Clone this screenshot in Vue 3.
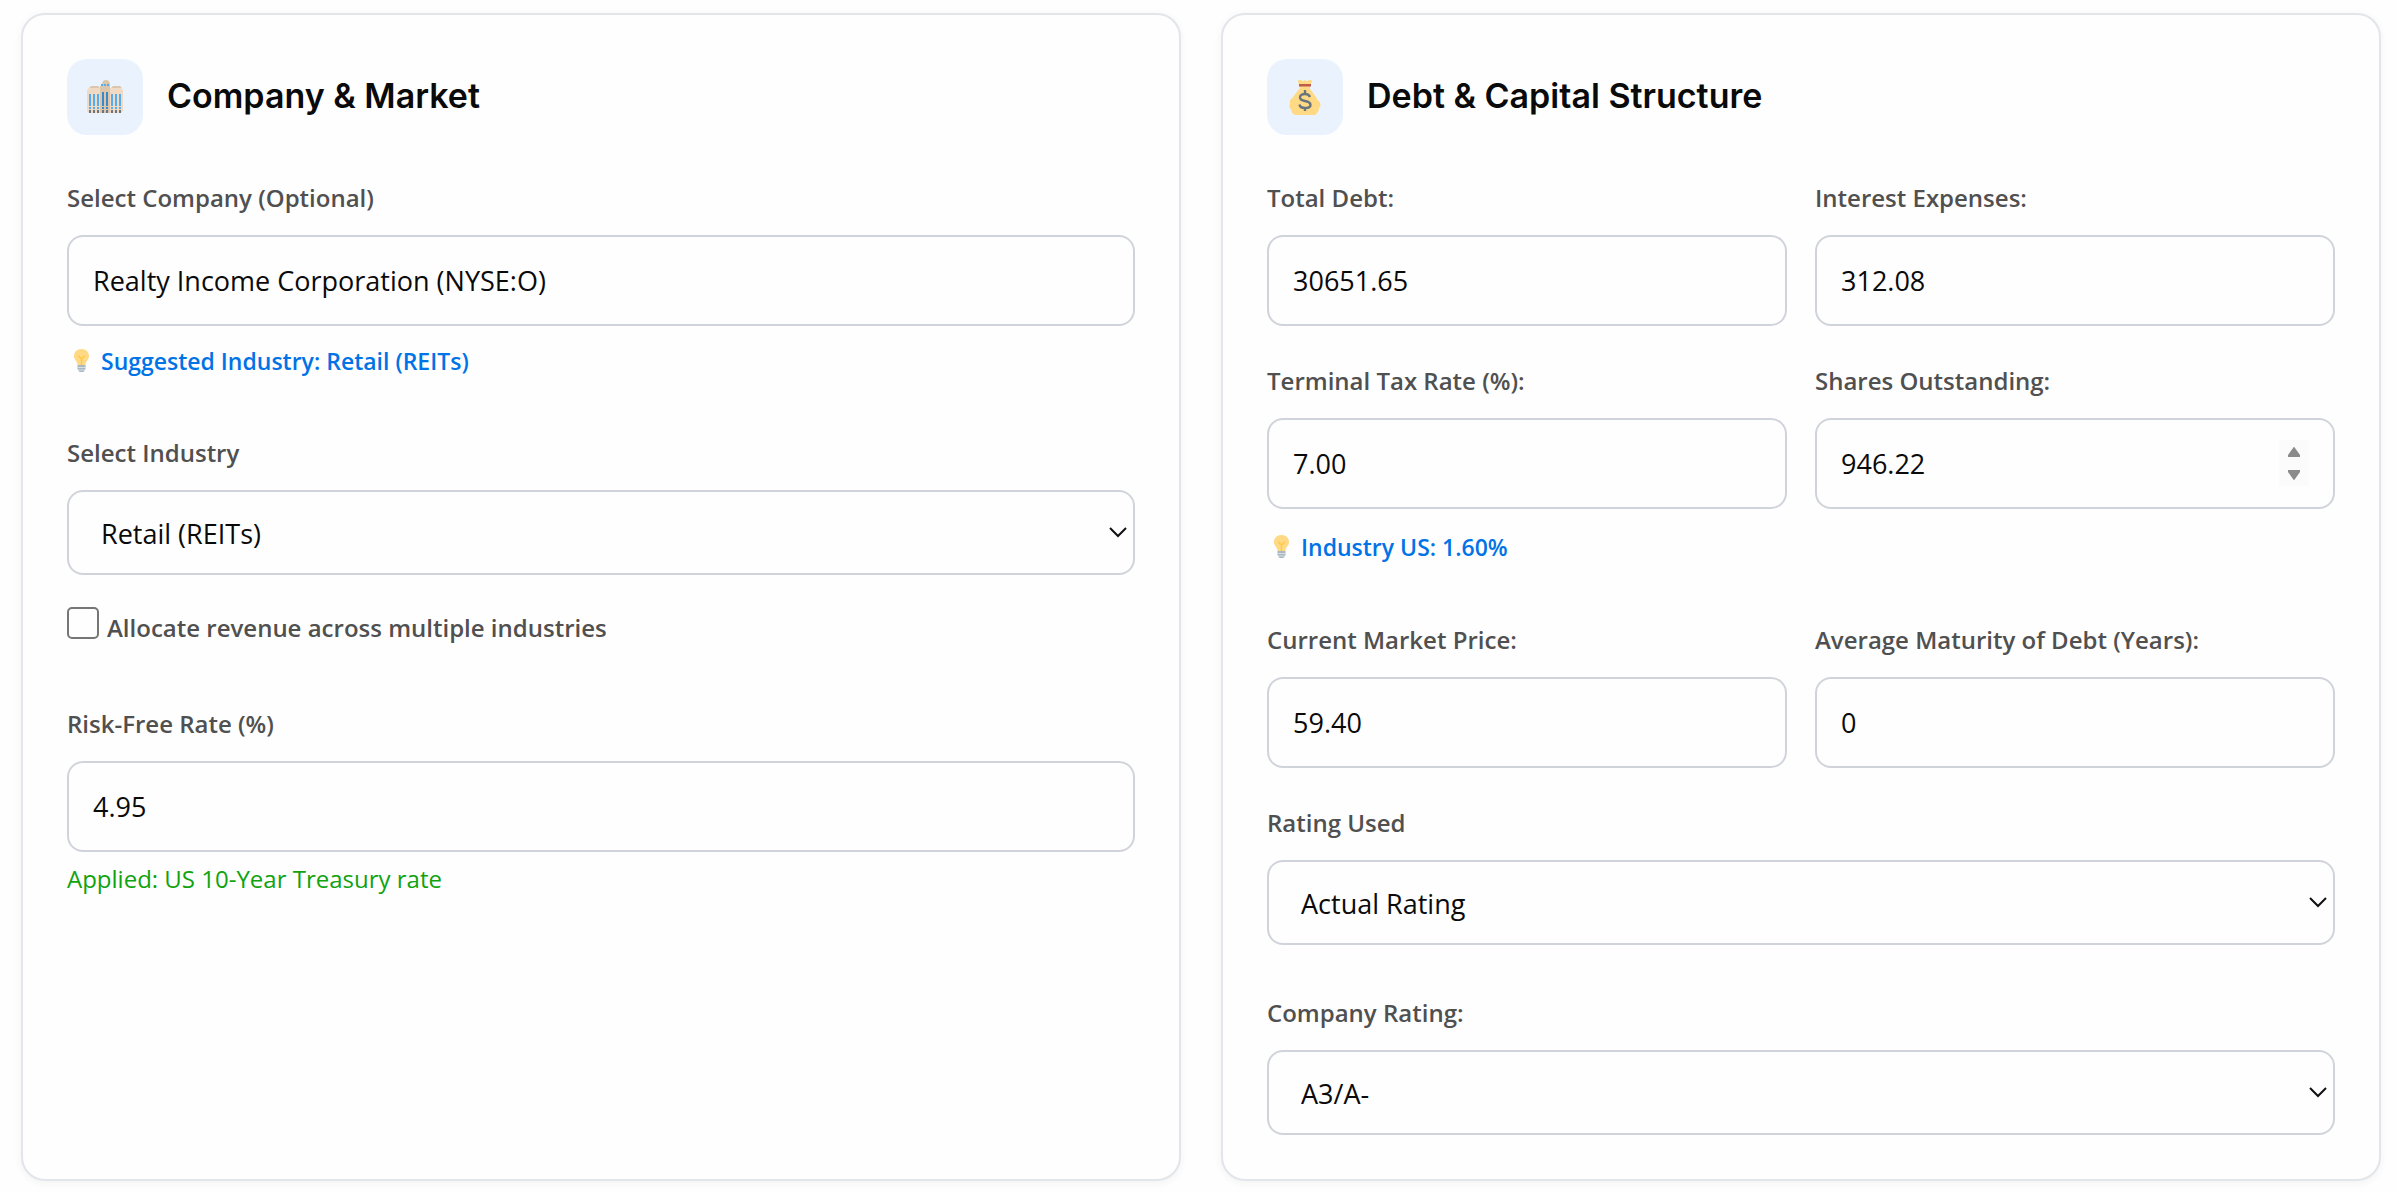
<template>
  <main class="panels">
    <section class="card">
      <header class="card-header">
        <span class="card-icon">
          <svg width="36" height="34" viewBox="0 0 36 34" aria-hidden="true">
            <path fill="#dcc5ad" d="M15 4 16 1 18 0H20L22 1 23 4V8H15ZM2 8 4 6H11L13 8ZM24 8 26 6H33L35 8Z" />
            <path fill="#f1dac3" d="M0 10 2 8H34L36 10V31L34 33H2L0 31Z" />
            <path fill="#dcc5ad" d="M13 6H23V33H13Z" />
            <path fill="#55adf0" d="M14 4h2v2h-2zM17 4h2v2h-2zM20 4h2v2h-2zM2 14h2v12H2zM6 14h2v12H6zM10 14h2v12h-2zM24 14h2v12h-2zM28 14h2v12h-2zM32 14h2v12h-2zM2 27h2v2H2zM6 27h2v2H6zM10 27h2v2h-2zM24 27h2v2h-2zM28 27h2v2h-2zM32 27h2v2h-2z" />
            <path fill="#3b88c7" d="M15 12h2v14h-2zM19 12h2v14h-2zM15 27h2v2h-2zM19 27h2v2h-2z" />
            <path fill="#6b7680" d="M2 30h2v3H2zM6 30h2v3H6zM10 30h2v3h-2zM15 30h2v3h-2zM19 30h2v3h-2zM24 30h2v3h-2zM28 30h2v3h-2zM32 30h2v3h-2z" />
          </svg>
        </span>
        <h2>Company &amp; Market</h2>
      </header>

      <div class="group">
        <label for="company">Select Company (Optional)</label>
        <input id="company" v-model="form.company" type="text">
        <p class="hint">
          <svg class="bulb" viewBox="0 0 15 24" aria-hidden="true">
            <path fill="#ffd983" d="M0 7C0 3 3 0 7.500 0S15 3 15 7C15 11 11.500 12 11.500 16H3.500C3.500 12 0 11 0 7Z" />
            <path fill="none" stroke="#ffc83d" stroke-width="1.200" d="M7.500 16V10L4.500 7M7.500 10 10.500 7" />
            <path fill="#a9b7c1" d="M3.500 16H11.500V20L9.500 23H5.500L3.500 20Z" />
            <path stroke="#d8e0e5" d="M3.500 18.500H11.500M4 21H11" />
          </svg>
          Suggested Industry: Retail (REITs)
        </p>
      </div>

      <div class="group">
        <label for="industry">Select Industry</label>
        <div class="select-box">
          <select id="industry" v-model="form.industry">
            <option>Retail (REITs)</option>
          </select>
          <svg class="chevron" viewBox="0 0 18 11" aria-hidden="true"><path d="M1 1 9 9 17 1" /></svg>
        </div>
        <label class="check">
          <input v-model="form.allocate" type="checkbox">
          <span>Allocate revenue across multiple industries</span>
        </label>
      </div>

      <div class="group">
        <label for="risk-free">Risk-Free Rate (%)</label>
        <input id="risk-free" v-model="form.riskFree" type="text">
        <p class="applied">Applied: US 10-Year Treasury rate</p>
      </div>
    </section>

    <section class="card">
      <header class="card-header">
        <span class="card-icon">
          <svg width="32" height="36" viewBox="0 0 32 36" aria-hidden="true">
            <path fill="#ffd983" d="M10 7 9 2Q10 0 12 1Q14 3 16 1Q18 3 20 1Q22 0 23 2L21 7V10L27 18Q28 21 30 22Q33 26 30 29Q30 33 26 36H6Q2 34 2 30Q-1 28 1 25Q0 21 4 18L11 9Z" />
            <path fill="#be5b4c" d="M10 5H22V7.500H10Z" />
            <path fill="none" stroke="#67757f" stroke-width="2.400" d="M21 18Q20 15 16 15Q11 15 11 18.500Q11 21 16 22Q21.500 23 21.500 26Q21.500 29 16 29Q11 29 10.500 25.500M16 11V16M16 28V32" />
          </svg>
        </span>
        <h2>Debt &amp; Capital Structure</h2>
      </header>

      <div class="row">
        <div class="group">
          <label for="debt">Total Debt:</label>
          <input id="debt" v-model="form.debt" type="text">
        </div>
        <div class="group">
          <label for="interest">Interest Expenses:</label>
          <input id="interest" v-model="form.interest" type="text">
        </div>
      </div>

      <div class="row">
        <div class="group">
          <label for="tax">Terminal Tax Rate (%):</label>
          <input id="tax" v-model="form.tax" type="text">
          <p class="hint tax-hint">
            <svg class="bulb" viewBox="0 0 15 24" aria-hidden="true">
              <path fill="#ffd983" d="M0 7C0 3 3 0 7.500 0S15 3 15 7C15 11 11.500 12 11.500 16H3.500C3.500 12 0 11 0 7Z" />
              <path fill="none" stroke="#ffc83d" stroke-width="1.200" d="M7.500 16V10L4.500 7M7.500 10 10.500 7" />
              <path fill="#a9b7c1" d="M3.500 16H11.500V20L9.500 23H5.500L3.500 20Z" />
              <path stroke="#d8e0e5" d="M3.500 18.500H11.500M4 21H11" />
            </svg>
            Industry US: 1.60%
          </p>
        </div>
        <div class="group">
          <label for="shares">Shares Outstanding:</label>
          <div class="number-box">
            <input id="shares" v-model.number="form.shares" type="number" step="0.01">
            <div class="spinner">
              <button type="button" aria-label="Increase" @click="stepShares(1)">
                <svg width="12" height="10" viewBox="0 0 12 10"><path d="M5 1Q6-1 7 1L12 8V10H0V8Z" /></svg>
              </button>
              <button type="button" aria-label="Decrease" @click="stepShares(-1)">
                <svg width="12" height="10" viewBox="0 0 12 10"><path d="M5 9Q6 11 7 9L12 2V0H0V2Z" /></svg>
              </button>
            </div>
          </div>
        </div>
      </div>

      <div class="row">
        <div class="group">
          <label for="price">Current Market Price:</label>
          <input id="price" v-model="form.price" type="text">
        </div>
        <div class="group">
          <label for="maturity">Average Maturity of Debt (Years):</label>
          <input id="maturity" v-model="form.maturity" type="text">
        </div>
      </div>

      <div class="group rating">
        <label for="rating-used">Rating Used</label>
        <div class="select-box">
          <select id="rating-used" v-model="form.ratingUsed">
            <option>Actual Rating</option>
          </select>
          <svg class="chevron" viewBox="0 0 18 11" aria-hidden="true"><path d="M1 1 9 9 17 1" /></svg>
        </div>
      </div>

      <div class="group">
        <label for="company-rating">Company Rating:</label>
        <div class="select-box">
          <select id="company-rating" v-model="form.companyRating">
            <option>A3/A-</option>
          </select>
          <svg class="chevron" viewBox="0 0 18 11" aria-hidden="true"><path d="M1 1 9 9 17 1" /></svg>
        </div>
      </div>
    </section>
  </main>
</template>

<script setup>
import { reactive } from 'vue';

const form = reactive({
  company: 'Realty Income Corporation (NYSE:O)',
  industry: 'Retail (REITs)',
  allocate: false,
  riskFree: '4.95',
  debt: '30651.65',
  interest: '312.08',
  tax: '7.00',
  shares: 946.22,
  price: '59.40',
  maturity: '0',
  ratingUsed: 'Actual Rating',
  companyRating: 'A3/A-'
});

function stepShares(direction) {
  form.shares = Number((form.shares + direction * 0.01).toFixed(2));
}
</script>

<style>
body {
  background: #fefefe;
}
</style>

<style scoped>
.panels {
  display: grid;
  grid-template-columns: 1fr 1fr;
  gap: 40px;
  padding: 13px 16px 11px 21px;
  font-family: "Open Sans", "Noto Sans", sans-serif;
  color: #0a0a0a;
}

.card {
  display: flex;
  flex-direction: column;
  gap: 38px;
  padding: 44px;
  background: #fefefe;
  border: 2px solid #e2e5e9;
  border-radius: 24px;
  box-shadow: 0 2px 8px rgba(0, 0, 0, 0.05);
}

.card-header {
  display: flex;
  align-items: center;
  gap: 24px;
  margin-bottom: 8px;
}

.card-icon {
  display: flex;
  align-items: center;
  justify-content: center;
  width: 76px;
  height: 76px;
  background: #eaf3fd;
  border-radius: 20px;
}

h2 {
  margin: 0;
  padding-bottom: 2px;
  font-family: Inter, sans-serif;
  font-size: 34px;
  line-height: 40px;
  font-weight: 600;
}

.row {
  display: grid;
  grid-template-columns: 1fr 1fr;
  gap: 28px;
}

label {
  display: block;
  margin-bottom: 20px;
  font-size: 24px;
  line-height: 34px;
  font-weight: 600;
  color: #505050;
}

input,
select {
  display: block;
  box-sizing: border-box;
  width: 100%;
  height: 91px;
  padding: 0 24px;
  border: 2px solid #d0d4da;
  border-radius: 16px;
  background: #fefefe;
  color: #0a0a0a;
  font-family: inherit;
  font-size: 27px;
}

select {
  height: 85px;
  padding: 2px 32px 0;
  appearance: none;
}

.select-box,
.number-box {
  position: relative;
}

.chevron {
  position: absolute;
  right: 8px;
  top: 37px;
  width: 18px;
  height: 11px;
  fill: none;
  stroke: #111;
  stroke-width: 2;
  pointer-events: none;
}

.hint {
  display: flex;
  align-items: center;
  gap: 12px;
  margin: 18px 0 20px;
  padding-left: 7px;
  font-size: 23px;
  line-height: 34px;
  font-weight: 600;
  color: #0073e6;
}

.tax-hint {
  margin: 21px 0;
}

.bulb {
  width: 15px;
  height: 24px;
}

.check {
  display: flex;
  align-items: flex-end;
  gap: 8px;
  margin: 32px 0 24px;
}

.check input {
  width: 32px;
  height: 32px;
  margin: 0 0 6px;
  padding: 0;
  appearance: none;
  border-color: #767676;
  border-radius: 5px;
}

.check input:checked {
  background: #0073e6;
}

.applied {
  margin: 10px 0 0;
  font-size: 24px;
  line-height: 34px;
  color: #0fa30f;
}

.rating {
  margin-bottom: 13px;
}

input[type="number"] {
  appearance: textfield;
}

input::-webkit-inner-spin-button {
  appearance: none;
}

.spinner {
  position: absolute;
  right: 26px;
  top: 22px;
  display: grid;
  width: 30px;
  height: 46px;
  background: #fbfbfb;
}

.spinner button {
  display: flex;
  align-items: center;
  justify-content: center;
  padding: 0;
  border: 0;
  background: none;
}

.spinner svg {
  fill: #8b8b8b;
}
</style>
